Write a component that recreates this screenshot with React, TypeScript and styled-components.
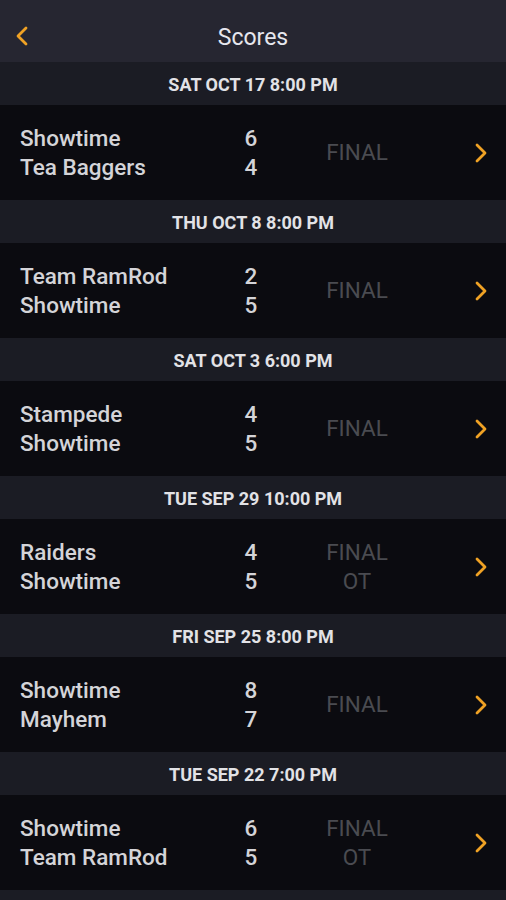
import React from 'react'
import styled, { createGlobalStyle } from 'styled-components'

const GlobalStyle = createGlobalStyle`
  html, body {
    margin: 0;
    padding: 0;
    background: #0b0b10;
  }
  body {
    font-family: Roboto, "Noto Sans", sans-serif;
    -webkit-font-smoothing: antialiased;
  }
`

const Screen = styled.div`
  width: 506px;
  height: 900px;
  overflow: hidden;
  background: #0b0b10;
  display: flex;
  flex-direction: column;
`

const TopBar = styled.header`
  height: 62px;
  flex: none;
  background: #262631;
  display: grid;
  grid-template-columns: 50px 1fr 50px;
  align-items: center;
`

const BackButton = styled.button`
  background: none;
  border: none;
  padding: 10px 0 0 15px;
  height: 100%;
  display: flex;
  align-items: center;
  cursor: pointer;
`

const Title = styled.h1`
  margin: 0;
  text-align: center;
  font-size: 23px;
  font-weight: 400;
  color: #e6e7ee;
  padding-top: 12px;
`

const DateBar = styled.div`
  height: 43px;
  flex: none;
  background: #1b1c24;
  display: flex;
  align-items: center;
  justify-content: center;
  color: #e2e2e6;
  font-size: 18px;
  font-weight: 700;
  letter-spacing: 0;
  padding-top: 1px;
  box-sizing: border-box;
`

const GameRow = styled.div`
  height: 95px;
  flex: none;
  background: #0b0b10;
  display: grid;
  grid-template-columns: 200px 62px 150px 1fr;
  align-items: center;
  padding-left: 20px;
  box-sizing: border-box;
`

const Stack = styled.div<{ $align?: string; $color?: string; $weight?: number }>`
  display: flex;
  flex-direction: column;
  align-items: ${({ $align }) => $align || 'flex-start'};
  color: ${({ $color }) => $color || '#d4d4d8'};
  font-weight: ${({ $weight }) => $weight || 500};
  font-size: 22.5px;
  line-height: 28.5px;
`

const Chevron = styled.div`
  display: flex;
  justify-content: flex-end;
  padding-right: 18px;
`

const ArrowIcon = ({ dir }: { dir: 'left' | 'right' }) => (
  <svg width="14" height="20" viewBox="0 0 14 20">
    <path
      d={dir === 'right' ? 'M3 2 L11 10 L3 18' : 'M11 2 L3 10 L11 18'}
      fill="none"
      stroke="#f0a224"
      strokeWidth="2.8"
      strokeLinecap="round"
      strokeLinejoin="round"
    />
  </svg>
)

type Game = {
  date: string
  teams: [string, string]
  scores: [number, number]
  ot?: boolean
}

const games: Game[] = [
  { date: 'SAT OCT 17 8:00 PM', teams: ['Showtime', 'Tea Baggers'], scores: [6, 4] },
  { date: 'THU OCT 8 8:00 PM', teams: ['Team RamRod', 'Showtime'], scores: [2, 5] },
  { date: 'SAT OCT 3 6:00 PM', teams: ['Stampede', 'Showtime'], scores: [4, 5] },
  { date: 'TUE SEP 29 10:00 PM', teams: ['Raiders', 'Showtime'], scores: [4, 5], ot: true },
  { date: 'FRI SEP 25 8:00 PM', teams: ['Showtime', 'Mayhem'], scores: [8, 7] },
  { date: 'TUE SEP 22 7:00 PM', teams: ['Showtime', 'Team RamRod'], scores: [6, 5], ot: true },
]

export default function App() {
  return (
    <>
      <GlobalStyle />
      <Screen>
        <TopBar>
          <BackButton aria-label="Back">
            <ArrowIcon dir="left" />
          </BackButton>
          <Title>Scores</Title>
          <div />
        </TopBar>
        {games.map((g) => (
          <React.Fragment key={g.date}>
            <DateBar>{g.date}</DateBar>
            <GameRow>
              <Stack>
                <span>{g.teams[0]}</span>
                <span>{g.teams[1]}</span>
              </Stack>
              <Stack $align="center">
                <span>{g.scores[0]}</span>
                <span>{g.scores[1]}</span>
              </Stack>
              <Stack $align="center" $color="#4a4b51" $weight={400}>
                <span>FINAL</span>
                {g.ot && <span>OT</span>}
              </Stack>
              <Chevron>
                <ArrowIcon dir="right" />
              </Chevron>
            </GameRow>
          </React.Fragment>
        ))}
        <DateBar />
      </Screen>
    </>
  )
}
